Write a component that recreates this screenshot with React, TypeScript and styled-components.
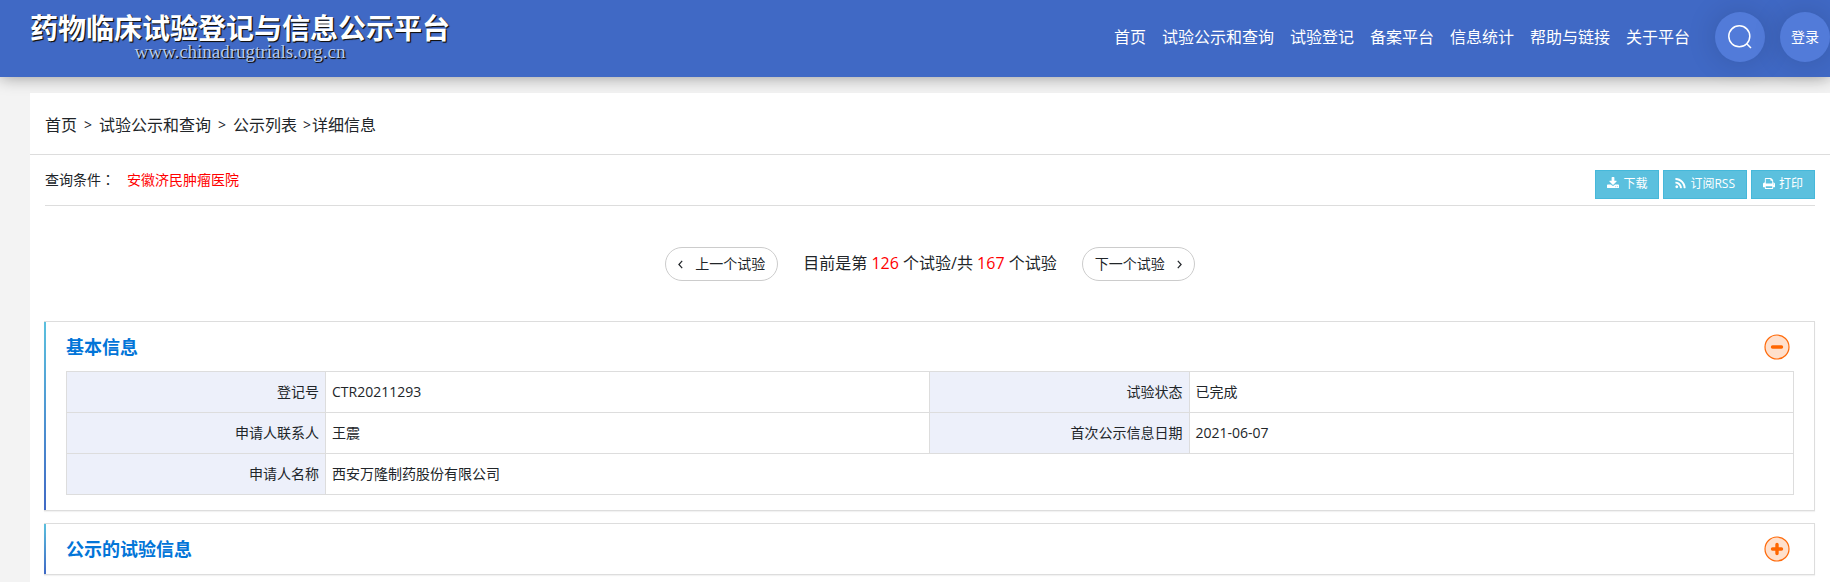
import React, { useState } from "react";
import styled, { createGlobalStyle } from "styled-components";

const GlobalStyle = createGlobalStyle`
  *, *::before, *::after { box-sizing: border-box; }
  body {
    margin: 0;
    background: #f3f3f3;
    color: #212529;
    font: 14px/20px "Open Sans", "Noto Sans CJK SC", sans-serif;
  }
  a { color: inherit; text-decoration: none; }
  button { font: inherit; color: inherit; cursor: pointer; }
`;

const Page = styled.div`
  display: flex;
  flex-direction: column;
  min-height: 100vh;
`;

const Header = styled.header`
  display: flex;
  align-items: flex-start;
  justify-content: space-between;
  height: 77px;
  padding: 12px 0 0 30px;
  background: #4069c5;
  box-shadow: 0 0 16px rgba(0, 0, 0, 0.4);
  color: #fff;
`;

const Brand = styled.a`
  display: flex;
  flex-direction: column;
  align-items: center;
  white-space: nowrap;
  text-shadow: 1px 1px 1px #111, 1px 1px 0 #222;
`;

const BrandName = styled.span`
  font-size: 28px;
  line-height: 32px;
  font-weight: 700;
`;

const BrandUrl = styled.span`
  color: #b4c8f0;
  font-family: "Liberation Serif", serif;
  font-size: 19px;
  line-height: 16px;
`;

const HeaderRight = styled.div`
  display: flex;
  align-items: center;
  gap: 25px;
`;

const Nav = styled.nav`
  display: flex;
  gap: 16px;
  font-size: 16px;
  line-height: 24px;
  white-space: nowrap;
`;

const RoundButtons = styled.div`
  display: flex;
  gap: 15px;
`;

const RoundButton = styled.button`
  display: flex;
  align-items: center;
  justify-content: center;
  width: 50px;
  height: 50px;
  padding: 0;
  border: 0;
  border-radius: 50%;
  background: #527bd9;
  box-shadow: 0 0 30px rgba(0, 0, 0, 0.15);
  color: #fff;
`;

const Content = styled.main`
  flex: 1;
  margin: 16px 0 0 30px;
  padding-bottom: 6px;
  background: #fff;
`;

const Breadcrumb = styled.nav`
  display: flex;
  align-items: center;
  height: 62px;
  padding: 2px 15px 0;
  border-bottom: 1px solid #ddd;
  font-size: 16px;
  line-height: 24px;
`;

const Separator = styled.span<{ $last?: boolean }>`
  margin: ${(p) => (p.$last ? "0 1px 0 6px" : "0 7px")};
  font-size: 14px;
`;

const QueryBar = styled.div`
  display: flex;
  align-items: flex-start;
  justify-content: space-between;
  height: 51px;
  margin: 0 15px;
  padding-top: 15px;
  border-bottom: 1px solid #ddd;
`;

const Query = styled.div`
  display: flex;
  gap: 12px;
`;

const Colon = styled.span`
  font-family: "Noto Sans CJK TC", sans-serif;
  line-height: 1;
`;

const QueryValue = styled.span`
  color: #f00;
`;

const Tools = styled.div`
  display: flex;
  gap: 4px;
`;

const ToolButton = styled.button`
  display: flex;
  align-items: center;
  gap: 4px;
  height: 29px;
  padding: 0 11px 2px;
  border: 1px solid #46b8da;
  background: #5bc0de;
  color: #fff;
  font-size: 12px;
  line-height: 16px;
`;

const Pager = styled.div`
  display: flex;
  align-items: center;
  justify-content: center;
  gap: 25px;
  padding: 41px 15px 40px;
`;

const PagerButton = styled.button`
  display: flex;
  align-items: center;
  gap: 12px;
  height: 34px;
  padding: 0 12px;
  border: 1px solid #ccc;
  border-radius: 17px;
  background: #fff;
`;

const Position = styled.span`
  padding-bottom: 2px;
  font-size: 16px;
  line-height: 24px;
`;

const Count = styled.span`
  color: #f00;
`;

const Panels = styled.div`
  display: flex;
  flex-direction: column;
  gap: 12px;
  padding: 0 15px 0 14px;
`;

const Panel = styled.section`
  padding: 0 20px 0 22px;
  border: 1px solid #ddd;
  border-left: 0;
  box-shadow: 0 1px 1px rgba(0, 0, 0, 0.05);
  background: linear-gradient(#5bc0de, #4069c5) left / 2px 100% no-repeat;
`;

const PanelHead = styled.div`
  display: flex;
  align-items: center;
  justify-content: space-between;
  height: 50px;
  padding-right: 4px;
`;

const PanelTitle = styled.h2`
  margin: 0;
  color: #0275d8;
  font-size: 18px;
  line-height: 24px;
  font-weight: 700;
`;

const PanelBody = styled.div`
  margin-top: -1px;
  padding-bottom: 15px;
`;

const Toggle = styled.button`
  display: flex;
  padding: 0;
  border: 0;
  border-radius: 50%;
  background: none;
`;

const Table = styled.table`
  width: 100%;
  table-layout: fixed;
  border-collapse: collapse;
`;

const Label = styled.th`
  height: 41px;
  padding: 0 6px;
  border: 1px solid #ddd;
  background: #edf0fa;
  font-weight: 400;
  text-align: right;
`;

const Value = styled.td`
  height: 41px;
  padding: 0 6px;
  border: 1px solid #ddd;
`;

const icons = {
  download: {
    width: 1664,
    path: "M1280 1344q0-26-19-45t-45-19-45 19-19 45 19 45 45 19 45-19 19-45zm256 0q0-26-19-45t-45-19-45 19-19 45 19 45 45 19 45-19 19-45zm128-224v320q0 40-28 68t-68 28h-1472q-40 0-68-28t-28-68v-320q0-40 28-68t68-28h465l135 136q58 56 136 56t136-56l136-136h464q40 0 68 28t28 68zm-325-569q17 41-14 70l-448 448q-18 19-45 19t-45-19l-448-448q-31-29-14-70 17-39 59-39h256v-448q0-26 19-45t45-19h256q26 0 45 19t19 45v448h256q42 0 59 39z",
  },
  rss: {
    width: 1408,
    path: "M384 1344q0 80-56 136t-136 56-136-56-56-136 56-136 136-56 136 56 56 136zm512 123q2 28-17 48-18 21-47 21h-135q-25 0-43-16.5t-20-41.5q-22-229-184.5-391.5t-391.5-184.5q-25-2-41.5-20t-16.5-43v-135q0-29 21-47 17-17 43-17h5q160 13 306 80.5t259 181.5q114 113 181.5 259t80.5 306zm512 2q2 27-18 47-18 20-46 20h-143q-26 0-44.5-17.5t-19.5-42.5q-12-215-101-408.5t-231.5-336-336-231.5-408.5-102q-25-1-42.5-19.5t-17.5-43.5v-143q0-28 20-46 18-18 44-18h3q262 13 501.5 120t425.5 294q187 186 294 425.5t120 501.5z",
  },
  print: {
    width: 1664,
    path: "M384 1536h896v-256h-896v256zm0-640h896v-384h-160q-40 0-68-28t-28-68v-160h-640v640zm1152 64q0-26-19-45t-45-19-45 19-19 45 19 45 45 19 45-19 19-45zm128 0v416q0 13-9.5 22.5t-22.5 9.5h-224v160q0 40-28 68t-68 28h-960q-40 0-68-28t-28-68v-160h-224q-13 0-22.5-9.5t-9.5-22.5v-416q0-79 56.5-135.5t135.5-56.5h64v-544q0-40 28-68t68-28h672q40 0 88 20t76 48l152 152q28 28 48 76t20 88v256h64q79 0 135.5 56.5t56.5 135.5z",
  },
};

function ToolIcon({ name }: { name: keyof typeof icons }) {
  const { width, path } = icons[name];
  return (
    <svg height="13" width={width > 1500 ? 12 : 11} viewBox={`0 0 ${width} 1792`} fill="currentColor" aria-hidden="true">
      <path d={path} />
    </svg>
  );
}

function SearchIcon() {
  return (
    <svg width="26" height="26" viewBox="0 0 26 26" fill="none" stroke="#fff" strokeWidth="1.5" aria-hidden="true">
      <circle cx="12.3" cy="12.3" r="10.5" />
      <path d="M19.5 19.5 L24 24" />
    </svg>
  );
}

function Chevron({ left }: { left?: boolean }) {
  return (
    <svg width="5" height="9" viewBox="0 0 5 9" fill="none" stroke="currentColor" strokeWidth="1.2" aria-hidden="true">
      <path d={left ? "M4.2 .8 L.9 4.5 L4.2 8.2" : "M.8 .8 L4.1 4.5 L.8 8.2"} />
    </svg>
  );
}

function ToggleIcon({ open }: { open: boolean }) {
  return (
    <svg width="26" height="26" viewBox="0 0 26 26" aria-hidden="true">
      <circle cx="13" cy="13" r="12" fill="#ffe0cc" stroke="#ff6a0a" strokeWidth="1.2" />
      <path d={open ? "M8.5 13h9" : "M8.5 13h9M13 8.5v9"} stroke="#ff6600" strokeWidth="3.4" strokeLinecap="round" />
    </svg>
  );
}

function InfoPanel({ title, initiallyOpen = false, children }: { title: string; initiallyOpen?: boolean; children?: React.ReactNode }) {
  const [open, setOpen] = useState(initiallyOpen);
  return (
    <Panel>
      <PanelHead>
        <PanelTitle>{title}</PanelTitle>
        <Toggle type="button" aria-label={title} aria-expanded={open} onClick={() => setOpen(!open)}>
          <ToggleIcon open={open} />
        </Toggle>
      </PanelHead>
      {open && children && <PanelBody>{children}</PanelBody>}
    </Panel>
  );
}

const navItems = ["首页", "试验公示和查询", "试验登记", "备案平台", "信息统计", "帮助与链接", "关于平台"];

const rows = [
  [["登记号", "CTR20211293"], ["试验状态", "已完成"]],
  [["申请人联系人", "王震"], ["首次公示信息日期", "2021-06-07"]],
  [["申请人名称", "西安万隆制药股份有限公司"]],
];

export default function App() {
  return (
    <Page>
      <GlobalStyle />
      <Header>
        <Brand href="#">
          <BrandName>药物临床试验登记与信息公示平台</BrandName>
          <BrandUrl>www.chinadrugtrials.org.cn</BrandUrl>
        </Brand>
        <HeaderRight>
          <Nav>
            {navItems.map((item) => (
              <a key={item} href="#">{item}</a>
            ))}
          </Nav>
          <RoundButtons>
            <RoundButton type="button" aria-label="搜索"><SearchIcon /></RoundButton>
            <RoundButton type="button">登录</RoundButton>
          </RoundButtons>
        </HeaderRight>
      </Header>
      <Content>
        <Breadcrumb>
          <a href="#">首页</a>
          <Separator>&gt;</Separator>
          <a href="#">试验公示和查询</a>
          <Separator>&gt;</Separator>
          <a href="#">公示列表</a>
          <Separator $last>&gt;</Separator>
          <span>详细信息</span>
        </Breadcrumb>
        <QueryBar>
          <Query>
            <span>查询条件<Colon>：</Colon></span>
            <QueryValue>安徽济民肿瘤医院</QueryValue>
          </Query>
          <Tools>
            <ToolButton type="button"><ToolIcon name="download" />下载</ToolButton>
            <ToolButton type="button"><ToolIcon name="rss" />订阅RSS</ToolButton>
            <ToolButton type="button"><ToolIcon name="print" />打印</ToolButton>
          </Tools>
        </QueryBar>
        <Pager>
          <PagerButton type="button"><Chevron left />上一个试验</PagerButton>
          <Position>
            目前是第 <Count>126</Count> 个试验/共 <Count>167</Count> 个试验
          </Position>
          <PagerButton type="button">下一个试验<Chevron /></PagerButton>
        </Pager>
        <Panels>
          <InfoPanel title="基本信息" initiallyOpen>
            <Table>
              <colgroup>
                <col width="15%" />
                <col width="35%" />
                <col width="15%" />
                <col width="35%" />
              </colgroup>
              <tbody>
                {rows.map((row) => (
                  <tr key={row[0][0]}>
                    {row.map(([label, value]) => (
                      <React.Fragment key={label}>
                        <Label scope="row">{label}</Label>
                        <Value colSpan={row.length === 1 ? 3 : 1}>{value}</Value>
                      </React.Fragment>
                    ))}
                  </tr>
                ))}
              </tbody>
            </Table>
          </InfoPanel>
          <InfoPanel title="公示的试验信息" />
        </Panels>
      </Content>
    </Page>
  );
}
